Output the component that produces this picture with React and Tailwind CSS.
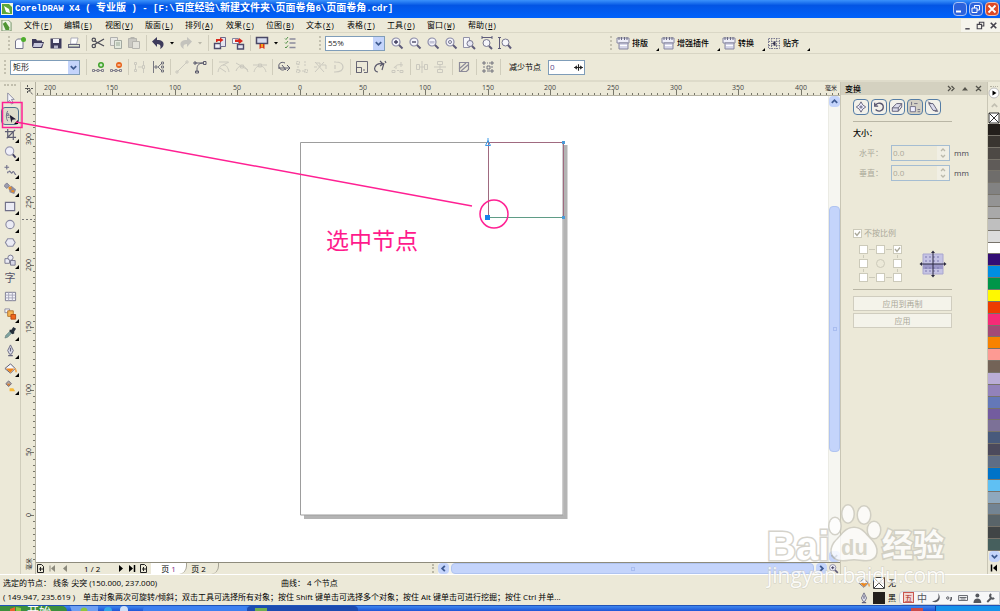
import clsx from 'clsx';

const MM_50 = 62.6;

const SWATCHES = [
  '#231f1b', '#393530', '#4d4945', '#5f5b58', '#6f6d6b', '#828282', '#949494', '#a9a9a9', '#bfbfbf',
  '#dcdcdc', '#ffffff', '#330e75', '#008ee2', '#009549', '#fff900', '#ee3c00', '#f52b77', '#a34a76',
  '#f78200', '#fd9a93', '#736357', '#baadd6', '#9282ba', '#6478b8', '#735c9f', '#7c7197', '#485a7c',
  '#4c4a5c', '#5e6d85', '#0073c8', '#5fc0f3', '#8fa8bd', '#738493', '#596469', '#414546', '#465f5d',
];

const MENUS = [
  ['文件', 'F'], ['编辑', 'E'], ['视图', 'V'], ['版面', 'L'], ['排列', 'A'], ['效果', 'C'],
  ['位图', 'B'], ['文本', 'X'], ['表格', 'T'], ['工具', 'O'], ['窗口', 'W'], ['帮助', 'H'],
];

const lens = (
  <>
    <circle cx="6" cy="6" r="4" fill="#f4f4fb" stroke="#8d8da8" strokeWidth="1.2" />
    <path d="M9 9l3.5 3.5" stroke="#5f5c7a" strokeWidth="2" />
  </>
);
const nodeSquares = <path d="M1.5 9.5h2v2h-2zM6 9.5h2v2H6zM10.5 9.5h2v2h-2zM3.5 10.5H6M8 10.5h2.5" stroke="#6d6b7d" fill="none" strokeWidth="0.8" />;
const calendar = (
  <>
    <path d="M1 2h12v5H1z" fill="#eeeef8" stroke="#8787a0" />
    <path d="M3 1v3M5.5 1v3M8.5 1v3M11 1v3" stroke="#6a6a82" />
    <path d="M3 7h9v6H3z" fill="#d5d5e8" stroke="#8787a0" />
    <path d="M4 9.5h7" stroke="#fff" />
  </>
);

const ICONS = {
  new: (
    <>
      <path d="M2.5 5l2-2H10v9.5H2.500z" fill="#fbfbfe" stroke="#76768c" />
      <circle cx="10.5" cy="3.5" r="2.5" fill="#4fae2d" />
    </>
  ),
  open: (
    <>
      <path d="M1 3h4l1 1.5h5V6h2l-2 6H2L1 10z" fill="#3e3b5c" />
      <path d="M3 7h9l-2 4H2z" fill="#c9c9dd" />
    </>
  ),
  save: (
    <>
      <path d="M1.5 2.5h11v10h-11z" fill="#3e3b5c" />
      <path d="M4 3h6v4H4z" fill="#f1f1f8" />
      <path d="M5 9.5h4v3H5z" fill="#b9b9cc" />
    </>
  ),
  print: (
    <>
      <path d="M4 2h7l-1.5 6h-6z" fill="#fff" stroke="#9a9aac" strokeWidth="0.8" />
      <path d="M1 8h12v4H1z" fill="#65657c" />
      <path d="M2 9h10v1.5H2z" fill="#dfe6d0" />
    </>
  ),
  cut: (
    <>
      <path d="M3.5 5l9.500 5M3.5 8.500L13 3" stroke="#4d4d58" strokeWidth="1.3" />
      <circle cx="2.8" cy="3.8" r="1.7" fill="none" stroke="#4d4d58" strokeWidth="1.2" />
      <circle cx="2.8" cy="10" r="1.7" fill="none" stroke="#4d4d58" strokeWidth="1.2" />
    </>
  ),
  copy: (
    <>
      <path d="M1.5 1.5h7v8h-7z" fill="#e8e8e4" stroke="#b0b0ae" />
      <path d="M5.5 4.5h7v8h-7z" fill="#e3e9dd" stroke="#a3a8a0" />
      <path d="M7 7h4M7 9h4" stroke="#9aaa98" />
    </>
  ),
  paste: (
    <>
      <path d="M1.5 2.5h8v9h-8z" fill="#c9c8c2" stroke="#b5b4ae" />
      <path d="M5.5 5.5h7v7h-7z" fill="#e3e2da" stroke="#b5b4ae" />
      <path d="M3.5 1h4v2h-4z" fill="#b5b4ae" />
    </>
  ),
  undo: <path d="M1 5.5L6 1v3c5 0 7 2 6.500 5-.3 1.800-1.500 3-3.500 4 1-2 1-5-3-5v3z" fill="#3e3b5c" />,
  redo: <path d="M13 5.5L8 1v3c-5 0-7 2-6.500 5 .3 1.800 1.500 3 3.500 4-1-2-1-5 3-5v3z" fill="#c4c3bd" />,
  importFile: (
    <>
      <path d="M1.5 7.5h6v5h-6z" fill="#f4f4fa" stroke="#4e4b6c" strokeWidth="1.4" />
      <path d="M7.5 1.5h5v9h-5z" fill="#e5e5f0" stroke="#6e6b8c" />
      <path d="M3 6V3h4V1.500L10.500 4 7 6.500V5H4.500v1z" fill="#d9271c" />
    </>
  ),
  exportFile: (
    <>
      <path d="M1.5 2.5h6v5h-6z" fill="#f4f4fa" stroke="#8686a0" />
      <path d="M6.5 8.5h6v4.500h-6z" fill="#e5e5f0" stroke="#4e4b6c" strokeWidth="1.4" />
      <path d="M4 3.5h4V2l4 3-4 3V6H4z" fill="#d9271c" />
    </>
  ),
  launcher: (
    <>
      <path d="M1.5 1.5h11v6h-11z" fill="#d7dcef" stroke="#4a4866" strokeWidth="1.5" />
      <path d="M4.5 8h5v5l-2.500-1.500L4.500 13z" fill="#d9391c" />
      <path d="M6 8h2v3H6z" fill="#f2a51c" />
    </>
  ),
  options: (
    <>
      <path d="M2 2.5l1 1 2-2.500M2 6.500l1 1L5 5M2 11l1 1 2-2.500" stroke="#55924a" fill="none" />
      <path d="M6.5 3h6M6.5 7h6M6.5 11.5h6" stroke="#8b8b9c" strokeWidth="1.4" />
    </>
  ),
  zoomIn: <>{lens}<path d="M4 6h4M6 4v4" stroke="#3e3b5c" strokeWidth="1.3" /></>,
  zoomOut: <>{lens}<path d="M4 6h4" stroke="#3e3b5c" strokeWidth="1.3" /></>,
  zoomOne: <>{lens}<path d="M3.5 5h5v2.500h-5z" fill="#c3c3d6" /></>,
  zoomSel: <>{lens}<circle cx="6" cy="6" r="1.5" fill="none" stroke="#77778f" /></>,
  zoomPage: <><path d="M1.5 1.5h6v10h-6z" fill="#f6f6fb" stroke="#9292a8" /><circle cx="8" cy="7.5" r="3" fill="#e8e8f5" stroke="#77778f" /><path d="M10 10l3 3" stroke="#5f5c7a" strokeWidth="2" /></>,
  zoomWidth: <><path d="M2 1.5h10M2 0v3M12 0v3" stroke="#5f5c7a" /><circle cx="6.5" cy="7" r="3.5" fill="#f6f6fb" stroke="#77778f" /><path d="M9 10l3 3" stroke="#5f5c7a" strokeWidth="2" /></>,
  zoomHeight: <><path d="M1.5 1v12M0 1.5h3M0 12.5h3" stroke="#5f5c7a" /><circle cx="7.5" cy="6.5" r="3.5" fill="#f6f6fb" stroke="#77778f" /><path d="M10 9l3 3.500" stroke="#5f5c7a" strokeWidth="2" /></>,
  addNode: <>{nodeSquares}<circle cx="10" cy="5" r="3" fill="#3fa32a" /><path d="M8.5 5h3M10 3.500v3" stroke="#fff" /></>,
  delNode: <>{nodeSquares}<circle cx="10" cy="5" r="3" fill="#e8641b" /><path d="M8.5 5h3" stroke="#fff" /></>,
  join: <path d="M1.5 2.5h2v2h-2zM1.5 9.5h2v2h-2zM2.5 5v4M5 7h4M9.5 5.5h2v3h-2zM10.5 1v4M10.5 9v4" stroke="currentColor" fill="none" />,
  split: <path d="M2.5 1v12M3 7h4M5 5v4M7 7l4-4M7 7l4 4M10.5 2h2v2h-2zM10.5 10h2v2h-2zM10.5 6h2v2h-2z" stroke="currentColor" fill="none" strokeWidth="0.8" />,
  line: <path d="M2 12L12 2M1 11h2v2H1zM11 1h2v2h-2z" stroke="currentColor" fill="none" />,
  curve: <path d="M4 12V9c0-4 2-6 7-6M2.5 11h3v2h-3zM2 3h9M1 2h2v2H1zM10.5 1.500h2.500v3h-2.500z" stroke="currentColor" fill="none" />,
  cusp: <path d="M1 12c1-5 3-7 6-7 2 0 4 2 5 7M2 2h9M6 5l6-3M3 8l6 4" stroke="currentColor" fill="none" />,
  smooth: <path d="M1 11c1-3 3-5 6-5s5 3 6 6M1 3l12 7M5.500 5h3v3h-3z" stroke="currentColor" fill="none" />,
  symmetric: <path d="M1 12c1-4 3-6 6-6s5 2 6 6M0 5h14M5.500 4h3v3h-3z" stroke="currentColor" fill="none" />,
  reverse: <path d="M8 3C4 1 1 4 2 7s4 4 6 2M1 8h12M10 5l3 3-3 3M5 5l4 5" stroke="currentColor" fill="none" />,
  close: <path d="M3 3v8h8M1.5 1.5h3v3h-3zM1.5 9.5h3v3h-3zM9.5 9.5h3v3h-3zM10 1v6" stroke="currentColor" fill="none" strokeDasharray="2 1" />,
  extract: <path d="M2 2l9 10M2 12l9-10M3 3h4v4M9 5h4v4M1 7h3" stroke="currentColor" fill="none" />,
  autoClose: <path d="M4 2c6 0 8 2 8 5s-2 5-8 5M4 5v4M3 2h2M3 12h2" stroke="currentColor" fill="none" strokeWidth="1.2" />,
  stretch: <path d="M1.5 12.500v-11h11v11M1.5 7.5h5v5h-5zM9 12.500h3.500M8 10h2" stroke="currentColor" fill="none" strokeWidth="0.9" />,
  rotate: <path d="M5 12c-3 0-4-3-3-5s3-4 7-3M7 1l3 3-3 2M9 10l2-7M12 1l1 2" stroke="currentColor" fill="none" strokeWidth="1.2" />,
  align: <path d="M1 10.5h3v2H1zM6 10.5h2M9 10.5h3v2H9zM3 8c2-3 4-4 9-3M5 6v3M10 2v5" stroke="currentColor" fill="none" />,
  mirrorH: <path d="M7 1v12M1.5 4.5h3v5h-3zM9.5 4.5h3v5h-3zM5 7h4" stroke="currentColor" fill="none" />,
  mirrorV: <path d="M1 7h12M4.5 1.5h5v3h-5zM4.5 9.5h5v3h-5zM7 4v5" stroke="currentColor" fill="none" />,
  elastic: <path d="M2.500 2.500h9v7l-2 2h-7zM2 9l7-6M4 11l8-7" stroke="#8c8a99" fill="none" strokeWidth="1.2" />,
  selectAll: <path d="M2 2h2v2H2zM10 2h2v2h-2zM2 10h2v2H2zM10 10h2v2h-2zM6 6h3v3H6zM6 3h1M8 3h1M3 6v2M11 6v2M6 11h3" stroke="currentColor" fill="none" strokeWidth="0.8" />,
  layout: calendar,
  snap: (
    <>
      <path d="M1.5 2.5h11v10h-11zM1.5 5.5h11M1.5 9.5h11M4.5 2v11M9.5 2v11" stroke="#77778f" strokeDasharray="1.5 1" fill="none" />
      <path d="M8.5 5v5L5 7.500z" fill="#34324c" />
    </>
  ),
  pick: <path d="M4 1l7 7H8l2 4-2 1-2-4-2 2z" fill="#f4f4fa" stroke="#8a8aa0" />,
  shape: (
    <>
      <path d="M4 1C2 4 2 9 4 12M3 4h2v2H3zM4 8h2" stroke="#70708a" fill="none" />
      <path d="M6 5l7 5-4 .5L8 14z" fill="#1f1d33" />
    </>
  ),
  crop: <path d="M4 1v9h9M1 4h9v9M3 11l9-9" stroke="#5e5e73" fill="none" strokeWidth="1.3" />,
  zoom: (
    <>
      <circle cx="6" cy="5.5" r="4.5" fill="#f0f0fa" stroke="#9a9ab2" strokeWidth="1.2" />
      <path d="M9.500 9l3 3.500" stroke="#3e3b5c" strokeWidth="2" />
    </>
  ),
  freehand: <path d="M3 1v5M.5 3.5h5M5 9c2-4 2 3 4 0s2 3 4 2M4 8v2" stroke="#70708a" fill="none" strokeWidth="1.2" />,
  smart: (
    <>
      <path d="M3 1l3 3-3 3-3-3z" fill="#9c9cae" stroke="#7c7c90" />
      <path d="M5 6l3-2 5 4-2 5-5-2z" fill="#8b8ba0" />
      <path d="M5 5h3v3H5zM8 9h3v2H8z" fill="#e98a1f" />
    </>
  ),
  rect: <path d="M1.5 2.5h10v9h-10z" fill="#ebebf5" stroke="#6f6f88" strokeWidth="1.2" />,
  ellipse: <circle cx="6.5" cy="7" r="4.5" fill="#ebebf5" stroke="#8a8aa2" strokeWidth="1.2" />,
  polygon: <path d="M4 3h5.500L12 7l-2.500 4H4L1.500 7z" fill="#ebebf5" stroke="#8a8aa2" strokeWidth="1.2" />,
  shapes: (
    <>
      <path d="M1 5h5v5H1z" fill="#ebebf5" stroke="#77778f" />
      <circle cx="7" cy="4" r="2.8" fill="#ebebf5" stroke="#77778f" />
      <path d="M7 7h5v5H7z" fill="#d7d7e6" stroke="#77778f" />
    </>
  ),
  table: <><path d="M1.5 2.5h11v9h-11z" fill="#f4f4fa" stroke="#77778f" /><path d="M1.5 5.5h11M1.5 8.5h11M5 2.500v9M9 2.500v9" stroke="#a5a5ba" /></>,
  blend: (
    <>
      <path d="M1 1h5v4H1z" fill="#f4f4fa" stroke="#8a8aa0" />
      <path d="M4 3h6v6H4z" fill="#f6b654" stroke="#b4742a" />
      <path d="M7.5 7h5v5h-5z" fill="#f0661b" stroke="#b44a14" />
    </>
  ),
  dropper: (
    <>
      <path d="M1 13l1-3 5-5 2 2-5 5z" fill="#7fa3a0" stroke="#5d7674" strokeWidth="0.6" />
      <path d="M6 4h2l2-3 3 2-2 3v2l-2 1-3-3z" fill="#26303c" />
    </>
  ),
  pen: (
    <>
      <path d="M7 1l3 6-2 4H6L4 7z" fill="#e3e3ef" stroke="#66667e" />
      <path d="M7 4v4M4.5 12.500h5" stroke="#66667e" strokeWidth="1.4" />
    </>
  ),
  bucket: (
    <>
      <path d="M1 7l6-5 5 5-5 5z" fill="#f7f7fb" stroke="#55556d" />
      <path d="M2 7h9l-4 4.500z" fill="#ee861c" />
      <path d="M12 7c2 2 1 4 1 4z" fill="#f2a54a" stroke="#f2a54a" />
    </>
  ),
  meshFill: (
    <>
      <path d="M5 1l3 3-3 3-3-3z" fill="#b5a99c" stroke="#66667e" />
      <path d="M3 4h4L5 6.500z" fill="#d97a2d" />
      <path d="M6 9h4l2 3H6z" fill="#f5b93d" />
    </>
  ),
  move: <path d="M7 1l2 3.500L12.500 7 9 9.500 7 13 5 9.500 1.500 7 5 4.500zM7 5v4M5 7h4" fill="#eef" stroke="#55546d" />,
  turn: <path d="M3 5c2-4 9-3 9 2s-6 6-9 3M2 2v4h4" fill="none" stroke="#55546d" strokeWidth="1.5" />,
  flip: <path d="M1.5 8h7v4h-7zM1.5 8l5-5h6l-4 5M12.500 3v4l-4 5" fill="#dcdcec" stroke="#55546d" />,
  size: <path d="M1.5 6.5h6v6h-6zM10 10h3M10 12.500h3M3 1v4M6 3h4" fill="#eef" stroke="#66657d" />,
  skew: <path d="M2 3h5l5 8H7zM1 1l4 2M9 12h4" fill="#dcdcec" stroke="#55546d" />,
};

function Glyph({ name, className = 'size-[14px]' }) {
  return (
    <svg viewBox="0 0 14 14" className={className} fill="none" aria-hidden="true">
      {ICONS[name]}
    </svg>
  );
}

function Tool({ name, label, dim }) {
  return (
    <button
      type="button"
      aria-label={label}
      className={clsx('flex h-[18px] w-[18px] shrink-0 items-center justify-center', dim ? 'text-[#cbc9bf]' : 'text-[#5b5a6c]')}
    >
      <Glyph name={name} />
    </button>
  );
}

function Caret({ dim }) {
  return (
    <svg viewBox="0 0 10 10" className={clsx('w-[10px] shrink-0', dim ? 'text-[#b9b7aa]' : 'text-black')} aria-hidden="true">
      <path d="M3 4h4L5 6.500z" fill="currentColor" />
    </svg>
  );
}

function Sep() {
  return (
    <div className="flex w-[6px] shrink-0 justify-center">
      <div className="h-4 w-px bg-[#d0cdbc]" />
    </div>
  );
}

function Grip() {
  return <div className="h-[14px] shrink-0 border-l-2 border-dotted border-[#c4c1b0]" />;
}

function Chevron({ d, className }) {
  return (
    <svg viewBox="0 0 10 10" className={clsx('size-[9px]', className)} fill="none" aria-hidden="true">
      <path d={d} stroke="currentColor" strokeWidth="2" />
    </svg>
  );
}

const UP = 'M2 6.500L5 3.500l3 3';
const DOWN = 'M2 3.500L5 6.500l3-3';
const LEFT = 'M6.500 2L3.500 5l3 3';
const RIGHT = 'M3.500 2l3 3-3 3';

function ScrollButton({ d, label }) {
  return (
    <button type="button" aria-label={label} className="flex size-[11px] shrink-0 items-center justify-center rounded-sm bg-[#c4d4fb] text-[#3f5b92]">
      <Chevron d={d} />
    </button>
  );
}

function Combo({ label, value, className }) {
  return (
    <div className={clsx('flex h-[15px] shrink-0 items-center border border-[#7f9db9] bg-white', className)}>
      <select aria-label={label} defaultValue={value} className="h-full min-w-0 flex-1 appearance-none bg-transparent pl-[2px] text-[8px] leading-[12px] text-[#222]">
        <option>{value}</option>
      </select>
      <span className="flex h-full w-[11px] items-center justify-center bg-[#c4d4fb] text-[#3f5b92]">
        <Chevron d={DOWN} />
      </span>
    </div>
  );
}

function TitleBar() {
  return (
    <header className="flex h-[18px] shrink-0 items-center bg-linear-to-b from-[#3b92fb] via-[#0355e4] via-30% to-[#0062fb] px-px font-bold text-white">
      <svg viewBox="0 0 12 12" className="mr-[2px] size-3" aria-hidden="true">
        <path d="M0 0h12v12H0z" fill="#f3f9e8" />
        <path d="M1 1h7l3 3v7H1z" fill="#5fa83a" />
        <path d="M3 3l5 3 1 4-4-1z" fill="#fff" />
      </svg>
      <h1 className="min-w-0 flex-1 whitespace-pre font-['Liberation_Mono','Noto_Sans_CJK_SC',monospace] text-[9px] leading-[16px]">
        CorelDRAW X4 ( <span className="text-[10px]">专业版</span> ) - [F:\<span className="text-[10px]">百度经验</span>\
        <span className="text-[10px]">新建文件夹</span>\<span className="text-[10px]">页面卷角</span>6\
        <span className="text-[10px]">页面卷角</span>.cdr]
      </h1>
      <div className="flex gap-[2px]">
        <button type="button" aria-label="最小化" className="flex size-[14px] items-center justify-center rounded-sm border border-[#a9c2f5] bg-[#2c62dc]">
          <svg viewBox="0 0 10 10" className="size-[10px]"><path d="M1 7.500h5" stroke="#fff" strokeWidth="2" /></svg>
        </button>
        <button type="button" aria-label="还原" className="flex size-[14px] items-center justify-center rounded-sm border border-[#a9c2f5] bg-[#2c62dc]">
          <svg viewBox="0 0 10 10" className="size-[10px]" fill="none"><path d="M1 4h5v4.500H1zM3.500 4V1.500h5V6H6" stroke="#fff" /></svg>
        </button>
        <button type="button" aria-label="关闭" className="flex size-[14px] items-center justify-center rounded-sm border border-[#f0c0b0] bg-[#dc4a26]">
          <svg viewBox="0 0 10 10" className="size-[10px]"><path d="M1.500 1.500l7 7M8.500 1.500l-7 7" stroke="#fff" strokeWidth="1.8" /></svg>
        </button>
      </div>
    </header>
  );
}

function MenuBar() {
  return (
    <nav className="flex h-[15px] shrink-0 items-center border-b border-[#dad7c6]">
      <svg viewBox="0 0 12 12" className="mr-3 ml-px size-[11px]" aria-hidden="true">
        <path d="M1 0h7l3 3v9H1z" fill="#eef4e4" stroke="#6f8f62" />
        <path d="M2 4l3-2 4 6v3H5z" fill="#4f9634" />
      </svg>
      {MENUS.map(([text, key]) => (
        <button key={key} type="button" className="w-10 shrink-0 text-left whitespace-nowrap leading-[13px] nth-[3n]:w-[41px]">
          {text}
          <span className="font-['Liberation_Mono',monospace] text-[7px]">(<u>{key}</u>)</span>
        </button>
      ))}
      <div className="ml-auto flex text-[#44424c]">
        <button type="button" aria-label="最小化文档" className="bg-[#f5f4ec] p-px"><svg viewBox="0 0 10 10" className="size-[11px]"><path d="M3 8h4" stroke="currentColor" strokeWidth="1.3" /></svg></button>
        <button type="button" aria-label="还原文档" className="bg-[#f5f4ec] p-px"><svg viewBox="0 0 10 10" className="size-[11px]" fill="none"><path d="M2 4h4v4H2zM4 4V2h4v3.500H6" stroke="currentColor" /></svg></button>
        <button type="button" aria-label="关闭文档" className="bg-[#f5f4ec] p-px"><svg viewBox="0 0 10 10" className="size-[11px]"><path d="M2.500 2.500l5 5M7.500 2.500l-5 5" stroke="currentColor" strokeWidth="1.5" /></svg></button>
      </div>
    </nav>
  );
}

function PluginButton({ name, text }) {
  return (
    <button type="button" className="flex shrink-0 items-center gap-[2px] whitespace-nowrap font-medium">
      <Glyph name={name} />
      {text}
      <svg viewBox="0 0 9 18" className="h-[18px] w-[9px]" aria-hidden="true"><path d="M9 14v3H6z" fill="#000" /></svg>
    </button>
  );
}

function StandardBar() {
  return (
    <div className="flex h-[21px] shrink-0 items-center border-b border-[#d8d5c4] pl-2">
      <Grip />
      <div className="w-px" />
      <Tool name="new" label="新建" />
      <Tool name="open" label="打开" />
      <Tool name="save" label="保存" />
      <Tool name="print" label="打印" />
      <Sep />
      <Tool name="cut" label="剪切" />
      <Tool name="copy" label="复制" />
      <Tool name="paste" label="粘贴" />
      <Sep />
      <Tool name="undo" label="撤消" />
      <Caret />
      <Tool name="redo" label="重做" />
      <Caret dim />
      <Sep />
      <Tool name="importFile" label="导入" />
      <Tool name="exportFile" label="导出" />
      <Sep />
      <Tool name="launcher" label="应用程序启动器" />
      <Caret />
      <Tool name="options" label="选项" />
      <div className="ml-5 flex items-center gap-1">
        <Grip />
        <Combo label="缩放级别" value="55%" className="w-[60px]" />
      </div>
      <div className="ml-[3px] flex">
        <Tool name="zoomIn" label="放大" />
        <Tool name="zoomOut" label="缩小" />
        <Tool name="zoomOne" label="实际大小" />
        <Tool name="zoomSel" label="缩放选定对象" />
        <Tool name="zoomPage" label="缩放页面" />
        <Tool name="zoomWidth" label="按页宽显示" />
        <Tool name="zoomHeight" label="按页高显示" />
      </div>
      <div className="ml-24 flex items-center gap-1">
        <Grip />
        <div className="flex gap-[2px]">
          <PluginButton name="layout" text="排版" />
          <PluginButton name="layout" text="增强插件" />
          <PluginButton name="layout" text="转换" />
          <PluginButton name="snap" text="贴齐" />
        </div>
      </div>
    </div>
  );
}

function PropertyBar() {
  return (
    <div className="flex h-7 shrink-0 items-center border-b-2 border-[#dedbca] pl-1">
      <Grip />
      <Combo label="选取范围模式" value="矩形" className="mr-[3px] ml-1 w-[70px]" />
      <Sep />
      <Tool name="addNode" label="添加节点" />
      <Tool name="delNode" label="删除节点" />
      <Sep />
      <Tool name="join" label="连接节点" dim />
      <Tool name="split" label="断开曲线" />
      <Sep />
      <Tool name="line" label="转换为线条" dim />
      <Tool name="curve" label="转换为曲线" />
      <Sep />
      <Tool name="cusp" label="尖突节点" dim />
      <Tool name="smooth" label="平滑节点" dim />
      <Tool name="symmetric" label="对称节点" dim />
      <Sep />
      <Tool name="reverse" label="反转方向" />
      <Tool name="close" label="延长曲线" dim />
      <Tool name="extract" label="提取子路径" dim />
      <Tool name="autoClose" label="闭合曲线" dim />
      <Sep />
      <Tool name="stretch" label="延展节点" />
      <Tool name="rotate" label="旋转节点" />
      <Tool name="align" label="对齐节点" dim />
      <Sep />
      <Tool name="mirrorH" label="水平反射" dim />
      <Tool name="mirrorV" label="垂直反射" dim />
      <Sep />
      <Tool name="elastic" label="弹性模式" />
      <Sep />
      <Tool name="selectAll" label="选择全部节点" />
      <Sep />
      <label htmlFor="reduce" className="ml-[6px] whitespace-nowrap">减少节点</label>
      <div className="ml-[7px] flex h-[15px] items-center border border-[#7f9db9] bg-white">
        <input id="reduce" defaultValue="0" className="w-6 pl-px text-[8px] text-[#5d4a8a]" />
        <svg viewBox="0 0 10 10" className="size-[11px]" aria-hidden="true"><path d="M1 5h8M5 2v6M3.500 3.500L2 5l1.500 1.500M6.500 3.500L8 5 6.500 6.500" stroke="#222" fill="none" /></svg>
      </div>
    </div>
  );
}

const TOOLBOX = [
  ['pick', '挑选'], ['shape', '形状', true], ['crop', '裁剪', true], ['zoom', '缩放', true], ['freehand', '手绘', true],
  ['smart', '智能填充', true], ['rect', '矩形', true], ['ellipse', '椭圆形', true], ['polygon', '多边形', true],
  ['shapes', '基本形状', true], ['text', '文本'], ['table', '表格'], ['blend', '交互式调和', true],
  ['dropper', '滴管', true], ['pen', '轮廓', true], ['bucket', '填充', true], ['meshFill', '交互式填充', true],
];

function Toolbox() {
  return (
    <aside className="flex w-[21px] shrink-0 flex-col items-center border-r border-[#d0cdbc] pt-[2px]">
      <div className="mb-[3px] w-3 border-t-2 border-dotted border-[#c2bfae]" />
      {TOOLBOX.map(([name, label, flyout]) => (
        <button
          key={name}
          type="button"
          aria-label={label}
          className={clsx(
            'relative flex h-[18px] w-[18px] shrink-0 items-center justify-center',
            name === 'shape' && 'rounded-sm border border-[#4f7390] bg-[#dedccb]',
          )}
        >
          {name === 'text' ? <span className="text-[11px] leading-[14px] text-[#55546a]">字</span> : <Glyph name={name} className="size-[13px]" />}
          {flyout && (
            <svg viewBox="0 0 4 4" className="absolute right-0 bottom-0 size-1" aria-hidden="true"><path d="M4 0v4H0z" fill="#000" /></svg>
          )}
        </button>
      ))}
    </aside>
  );
}

function VerticalRuler() {
  const zero = 433;
  const ticks = Array.from({ length: 75 }, (_, i) => i - 8);
  return (
    <svg className="h-full w-[15px] shrink-0 border-r border-[#b5b2a2]" aria-hidden="true">
      {ticks.map((i) => {
        const y = Math.round(zero - (i * MM_50) / 10);
        return y > 16 && y < 478 ? <path key={i} d={`M${i % 10 === 0 ? 9 : 12} ${y + 0.5}h4`} stroke="#77766a" /> : null;
      })}
      {[300, 250, 200, 150, 100, 50, 0].map((mm) => {
        const y = Math.round(zero - (mm / 50) * MM_50);
        return <text key={mm} x="10" y={y} fontSize="7" fill="#444" textAnchor="middle" transform={`rotate(-90 10 ${y})`}>{mm}</text>;
      })}
      <text x="10" y="482" fontSize="6" fill="#222" textAnchor="middle" transform="rotate(-90 10 482)">毫米</text>
      <path d="M1 137.500h14" stroke="#777" strokeDasharray="2 2" />
      <path d="M4 6.500h8M6.500 3v9M8 8l4 5M8 8v3M8 8h3" stroke="#555" strokeDasharray="2 1" fill="none" />
    </svg>
  );
}

function HorizontalRuler() {
  const zero = 264;
  const ticks = Array.from({ length: 130 }, (_, i) => i - 42);
  return (
    <svg className="h-[14px] w-full shrink-0 border-b border-[#b5b2a2]" aria-hidden="true">
      {ticks.map((i) => (
        <path key={i} d={`M${Math.round(zero + (i * MM_50) / 10) + 0.5} ${i % 10 === 0 ? 8 : 11}V13`} stroke="#77766a" />
      ))}
      {[-200, -150, -100, -50, 0, 50, 100, 150, 200, 250, 300, 350, 400].map((mm) => (
        <text key={mm} x={Math.round(zero + (mm / 50) * MM_50)} y="8" fontSize="7" fill="#444" textAnchor="middle">{Math.abs(mm)}</text>
      ))}
      <text x="789" y="8" fontSize="6" fill="#222">毫米</text>
    </svg>
  );
}

function Canvas() {
  return (
    <svg className="h-full min-w-0 flex-1 bg-white" aria-label="绘图页面">
      <path d="M268 421h261.500V49" stroke="#b4b4b4" strokeWidth="4" fill="none" />
      <path d="M264.500 46.500h262.500v372.500H264.500z" fill="#fff" stroke="#9d9d9d" />
      <path d="M452.500 121V46.500h75V121" stroke="#a06a80" fill="none" />
      <path d="M452 121.500h75" stroke="#5f9c86" fill="none" />
      <path d="M449.500 49.500h5l-2.500-5zM452 42v4" stroke="#3d9be8" fill="none" />
      <path d="M449 119h5v5h-5z" fill="#1683ea" />
      <path d="M526 45h3v3h-3zM526 120h3v3h-3z" fill="#4b9bd8" />
    </svg>
  );
}

function PageBar() {
  return (
    <div className="flex h-3 shrink-0 items-stretch border-t border-[#8e8b7c]">
      <div className="flex flex-1 items-center">
        <svg viewBox="0 0 48 11" className="h-[11px] w-12 shrink-0" fill="none" aria-hidden="true">
          <path d="M1.500 1.500h4l2 2v6h-6zM3 6h4M4.500 4v4" stroke="#222" />
          <path d="M14 2.500v6" stroke="#8b897c" /><path d="M19 2v7l-4-3.500z" fill="#8b897c" />
          <path d="M31 2v7l-4-3.500z" fill="#8b897c" />
        </svg>
        <span className="w-[33px] whitespace-nowrap">1 / 2</span>
        <svg viewBox="0 0 34 11" className="h-[11px] w-[34px] shrink-0" fill="none" aria-hidden="true">
          <path d="M2 2v7l4-3.500zM12 2v7l4-3.500z" fill="#000" /><path d="M17.500 2v7" stroke="#000" strokeWidth="1.5" />
          <path d="M23.500 1.500h4l2 2v6h-6zM25 6h4M26.500 4v4" stroke="#222" />
        </svg>
        <button type="button" className="h-full w-9 rounded-br-lg border-r border-[#a5a294] bg-white leading-[11px]">页 <span className="text-[#7b2a86]">1</span></button>
        <button type="button" className="h-full w-8 rounded-br-lg border-r border-[#a5a294] pr-2 leading-[11px]">页 2</button>
        <div className="mr-1 ml-auto h-[9px] border-l-2 border-dotted border-[#bab7a6]" />
      </div>
      <div className="flex w-[389px] items-center gap-[2px] bg-[#f3f3ee]">
        <ScrollButton d={LEFT} label="向左滚动" />
        <div className="flex h-full flex-1 items-center justify-center rounded-sm border border-[#b0c4f0] bg-[#c4d4fb]">
          <div className="size-1 border border-[#a9bdf0]" />
        </div>
        <ScrollButton d={RIGHT} label="向右滚动" />
      </div>
      <Glyph name="zoomIn" className="mx-px size-[11px]" />
    </div>
  );
}

function VerticalScroll() {
  return (
    <div className="flex w-3 shrink-0 flex-col items-center border-l border-[#ebebe4] bg-[#f6f6f1]">
      <ScrollButton d={UP} label="向上滚动" />
      <div className="flex w-full flex-1 flex-col">
        <div className="grow-[100]" />
        <div className="flex grow-[244] items-center justify-center rounded-sm border border-[#b0c4f0] bg-[#c4d4fb]">
          <div className="size-1 border border-[#a9bdf0]" />
        </div>
        <div className="grow-[100]" />
      </div>
      <ScrollButton d={DOWN} label="向下滚动" />
    </div>
  );
}

function SizeField({ id, label }) {
  return (
    <div className="flex h-[20px] items-center pl-[6px] text-[#aaa899]">
      <label htmlFor={id} className="w-8 whitespace-nowrap">{label}：</label>
      <div className="flex h-4 w-[59px] items-center border border-[#a5bdd2]">
        <input id={id} defaultValue="0.0" disabled className="w-0 flex-1 pl-px text-[8px]" />
        <svg viewBox="0 0 12 14" className="h-full w-3 bg-[#f1efe4]" fill="none" aria-hidden="true">
          <path d="M4 5l2-2 2 2M4 9l2 2 2-2" stroke="#bbb9ab" strokeWidth="1.3" />
        </svg>
      </div>
      <span className="ml-1 text-[#44434f]">mm</span>
    </div>
  );
}

function Tick({ id, checked }) {
  return (
    <span className="relative flex size-[9px] shrink-0">
      <input id={id} type="checkbox" aria-label={id ? undefined : '锚点'} defaultChecked={checked} disabled className="size-[9px] appearance-none border border-[#cccaba] bg-white" />
      {checked && (
        <svg viewBox="0 0 9 9" className="absolute inset-0 size-[9px]" fill="none" aria-hidden="true"><path d="M2 4l2 2.500 3-4" stroke="#aaa899" strokeWidth="1.3" /></svg>
      )}
    </span>
  );
}

function Docker() {
  return (
    <section className="flex w-[147px] shrink-0 flex-col border-l border-[#c9c6b5]">
      <div className="flex h-[13px] items-center gap-[6px] bg-[#d4d1c0] pr-1 pl-1 text-[#55544c]">
        <h2 className="flex-1 font-medium text-black">变换</h2>
        <svg viewBox="0 0 36 9" className="h-[9px] w-9" fill="none" aria-hidden="true">
          <path d="M1 2l2.500 2.500L1 7M4.500 2L7 4.500 4.500 7M29 2l5 5M34 2l-5 5" stroke="currentColor" strokeWidth="1.3" />
          <path d="M15 6.500h6L18 3z" fill="currentColor" />
        </svg>
      </div>
      <div className="flex flex-col px-3 pt-1">
        <div className="flex gap-[2px]">
          {[['move', '位置'], ['turn', '旋转'], ['flip', '比例和镜像'], ['size', '大小'], ['skew', '倾斜']].map(([name, label]) => (
            <button
              key={name}
              type="button"
              aria-label={label}
              className={clsx('flex size-4 items-center justify-center rounded-sm border border-[#557da5]', name === 'size' ? 'bg-[#d3d0c4]' : 'bg-[#f2f1ea]')}
            >
              <Glyph name={name} className="size-3" />
            </button>
          ))}
        </div>
        <div className="mt-[6px] h-px w-[99px] bg-[#b9b6a5]" />
        <p className="mt-1 mb-[3px] leading-[14px] font-medium">大小：</p>
        <SizeField id="size-h" label="水平" />
        <SizeField id="size-v" label="垂直" />
        <label htmlFor="keep-ratio" className="mt-[44px] flex items-center gap-[2px] leading-[12px] text-[#aaa899]">
          <Tick id="keep-ratio" checked />
          不按比例
        </label>
        <div className="mt-[6px] flex items-center justify-between pr-7 pl-[6px]">
          <div className="relative grid grid-cols-3 gap-x-2 gap-y-[5px]">
            <Tick />
            <Tick />
            <Tick checked />
            <Tick />
            <span className="size-[9px] rounded-full border border-[#cccaba]" />
            <Tick />
            <Tick />
            <Tick />
            <Tick />
            <svg viewBox="0 0 43 37" className="absolute inset-0 h-[37px] w-[43px]" fill="none" aria-hidden="true">
              <path d="M10 4.500h6M27 4.500h6M10 32.500h6M27 32.500h6M4.500 10v3M4.500 24v3M38.500 10v3M38.500 24v3" stroke="#cccaba" />
            </svg>
          </div>
          <svg viewBox="0 0 28 28" className="size-7" fill="none" aria-hidden="true">
            <path d="M4 4h20v20H4z" fill="#c5c3e4" stroke="#a9a6cf" />
            <path d="M4 14h20v5H4z" fill="#9c98c8" />
            <path d="M6 7h16M6 11h16M6 18h16M6 21h16" stroke="#7d79ae" strokeDasharray="2 2" />
            <path d="M14 2v24M2 14h24" stroke="#2b2940" />
            <path d="M12 3h4l-2-2.500zM12 25h4l-2 2.500zM3 12v4L.5 14zM25 12v4l2.500-2z" fill="#2b2940" />
          </svg>
        </div>
        <div className="mt-[7px] h-px w-[99px] bg-[#b9b6a5]" />
        <button type="button" disabled className="mt-[6px] h-[15px] w-[99px] border border-[#d0cdbf] bg-[#f4f3ea] leading-[12px] text-[#aaa899]">应用到再制</button>
        <button type="button" disabled className="mt-[2px] h-[15px] w-[99px] border border-[#d0cdbf] bg-[#f4f3ea] leading-[12px] text-[#aaa899]">应用</button>
      </div>
    </section>
  );
}

function Palette() {
  return (
    <aside className="flex w-[13px] shrink-0 flex-col items-center border-l border-[#c9c6b5] pt-1">
      <div className="w-2 border-t border-dotted border-[#b5b2a2]" />
      <svg viewBox="0 0 12 12" className="size-3 shrink-0" aria-hidden="true"><circle cx="6" cy="6" r="5" fill="#fff" stroke="#bbb" /><path d="M4.500 3.500v5L8.500 6z" fill="#000" /></svg>
      <Chevron d={UP} className="my-[2px] text-[#c2c0b2]" />
      <svg viewBox="0 0 12 12" className="size-3 shrink-0" aria-hidden="true"><path d="M1 1h10v10H1zM1 1l10 10M11 1L1 11" fill="#fff" stroke="#333" /></svg>
      <div className="flex w-full flex-1 flex-col">
        {SWATCHES.map((color) => (
          <button key={color} type="button" aria-label={color} className="w-full flex-1 border-b border-[#77736a]" style={{ backgroundColor: color }} />
        ))}
      </div>
      <ScrollButton d={DOWN} label="更多颜色" />
      <svg viewBox="0 0 12 12" className="size-3 shrink-0" aria-hidden="true"><path d="M3.500 2.500v7" stroke="#000" strokeWidth="1.5" /><path d="M9 2.500v7L5 6z" fill="#000" /></svg>
    </aside>
  );
}

function ImeBar() {
  return (
    <div className="flex h-[14px] w-[101px] items-center gap-[3px] rounded-l-sm border border-[#c9ccd2] bg-[#f6f7f8] pl-[3px] text-[10px] text-[#55585e]">
      <span className="flex size-[11px] items-center justify-center border border-[#c9564e] bg-[#f3d6d2] text-[8px] leading-[9px] text-[#a5231c]">五</span>
      <span className="leading-[12px]">中</span>
      <svg viewBox="0 0 70 12" className="h-3 w-[70px]" fill="none" aria-hidden="true">
        <path d="M8 1c2 5-1 8-6 8 5 4 11-2 6-8z" fill="#55585e" />
        <circle cx="18" cy="6" r="1.2" stroke="#55585e" />
        <path d="M21.500 5v2l-1 2" stroke="#55585e" strokeWidth="1.5" />
        <path d="M29 3.500h9v5h-9zM30 5.500h7M31 7h5" stroke="#66696f" />
        <circle cx="48" cy="3.5" r="2" fill="#55585e" /><path d="M44 11c0-6 8-6 8 0z" fill="#55585e" />
        <path d="M58 10l4-4M62 2a2 2 0 003 4" stroke="#55585e" strokeWidth="2" />
      </svg>
    </div>
  );
}

function StatusBar() {
  return (
    <footer className="flex h-[31px] shrink-0 border-t border-white">
      <div className="flex min-w-0 flex-1 flex-col justify-center pl-[3px] leading-[14px] whitespace-nowrap">
        <div className="flex">
          <p className="w-[278px]">选定的节点： 线条 尖突 (150.000, 237.000)</p>
          <p>曲线： 4 个节点</p>
        </div>
        <div className="flex">
          <p className="w-[80px]">( 149.947, 235.619 )</p>
          <p>单击对象两次可旋转/倾斜；双击工具可选择所有对象；按住 Shift 键单击可选择多个对象；按住 Alt 键单击可进行挖掘；按住 Ctrl 并单...</p>
        </div>
      </div>
      <div className="flex w-[142px] shrink-0 flex-col pt-px">
        <div className="flex h-[14px] items-center gap-[3px]">
          <Glyph name="bucket" className="size-3" />
          <svg viewBox="0 0 12 12" className="size-3" aria-hidden="true"><path d="M.5.500h11v11H.5zM1 1l10 10M11 1L1 11" fill="#fff" stroke="#444" /></svg>
          <span>无</span>
        </div>
        <div className="flex h-[15px] items-center gap-[3px]">
          <Glyph name="pen" className="size-3" />
          <span className="size-3 bg-[#231f1b]" />
          <span>黑</span>
          <div className="ml-auto"><ImeBar /></div>
        </div>
      </div>
    </footer>
  );
}

function Taskbar() {
  return (
    <div className="flex h-[6px] shrink-0 overflow-hidden border-t border-[#1f53b8] bg-linear-to-b from-[#3f86ee] to-[#1f55d6] text-[12px] leading-[12px] text-white">
      <div className="flex w-[67px] items-start rounded-tr-lg bg-[#3c8f3c] pl-[9px]">
        <svg viewBox="0 0 14 6" className="h-[6px] w-[14px]" aria-hidden="true"><path d="M1 3l5-2v5H1z" fill="#e8622a" /><path d="M7 1l5 1v4H7z" fill="#8ac63f" /></svg>
        <span className="ml-1">开始</span>
      </div>
      <svg viewBox="0 0 76 6" className="h-[6px] w-[76px]" aria-hidden="true">
        <path d="M3 0h28v6H5z" fill="#6fa0f2" />
        <circle cx="17" cy="5" r="3.5" fill="#8cc63f" /><circle cx="41" cy="5" r="4" fill="#35a8e8" /><circle cx="57" cy="4" r="4" fill="#cfe0f8" />
      </svg>
      <div className="w-[104px] rounded-t-sm bg-[#3d80f0]" />
      <div className="w-[111px] rounded-t-sm bg-[#1c4bb0] pl-2"><div className="mt-[2px] h-1 w-3 bg-[#6fae4f]" /></div>
      <div className="mt-[2px] mr-3 ml-auto h-2 w-3 bg-[#c94a4a]" />
      <div className="w-[65px] border-l border-[#0d3f9e] bg-[#1592ea]" />
    </div>
  );
}

function Annotations() {
  return (
    <svg className="pointer-events-none absolute inset-0 size-full" fill="none">
      <path d="M2.500 20.500h19.500v25H2.500z" stroke="#ff2093" strokeWidth="1.5" />
      <path d="M16 40L472 124" stroke="#ff2093" strokeWidth="1.5" />
      <circle cx="494" cy="132" r="14" stroke="#ff2093" strokeWidth="1.5" />
      <text x="326" y="167" fontSize="23" fill="#ff1a8c">选中节点</text>
    </svg>
  );
}

function Watermark() {
  return (
    <svg viewBox="0 0 180 90" className="pointer-events-none absolute right-[54px] bottom-[20px] h-[90px] w-[180px]" fill="#fff" stroke="#cbc9bf" paintOrder="stroke" strokeWidth="3" opacity="0.8">
      <text x="1" y="59" fontSize="40" fontWeight="700" fontFamily="Liberation Sans, sans-serif">Bai</text>
      <ellipse cx="69" cy="25" rx="5.5" ry="8" />
      <ellipse cx="82" cy="13" rx="5.5" ry="8.500" />
      <ellipse cx="98" cy="14" rx="6" ry="8.500" />
      <ellipse cx="108" cy="29" rx="6" ry="8" />
      <path d="M88 27c8 0 11 6 16 11 9 8 9 21-4 21-4 0-8-1-12-1s-7 1-11 1c-14 0-14-13-5-21 5-5 8-11 16-11z" />
      <text x="75" y="54" fontSize="22" fontWeight="700" fontFamily="Liberation Sans, sans-serif" fill="#d3d1c6" stroke="none">du</text>
      <text x="116" y="55" fontSize="31" fontWeight="700">经验</text>
      <text x="1" y="82" fontSize="21" fontFamily="Open Sans, sans-serif" strokeWidth="1">jingyan.baidu.com</text>
    </svg>
  );
}

export default function App() {
  return (
    <div className="relative flex h-screen flex-col overflow-hidden bg-[#ece9d8] font-['Open_Sans','Noto_Sans_CJK_SC',sans-serif] text-[8px] text-black">
      <TitleBar />
      <MenuBar />
      <StandardBar />
      <PropertyBar />
      <main className="relative flex min-h-0 flex-1">
        <Toolbox />
        <VerticalRuler />
        <div className="flex min-w-0 flex-1 flex-col">
          <HorizontalRuler />
          <div className="flex min-h-0 flex-1">
            <Canvas />
            <VerticalScroll />
          </div>
          <PageBar />
        </div>
        <Docker />
        <Palette />
        <Annotations />
      </main>
      <StatusBar />
      <Taskbar />
      <Watermark />
    </div>
  );
}
